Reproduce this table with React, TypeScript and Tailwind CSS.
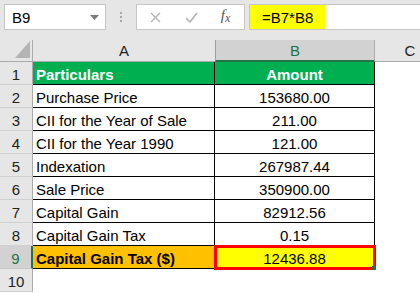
import React from "react";

const rows: { n: number; a: string; b: string }[] = [
  { n: 2, a: "Purchase Price", b: "153680.00" },
  { n: 3, a: "CII for the Year of Sale", b: "211.00" },
  { n: 4, a: "CII for the Year 1990", b: "121.00" },
  { n: 5, a: "Indexation", b: "267987.44" },
  { n: 6, a: "Sale Price", b: "350900.00" },
  { n: 7, a: "Capital Gain", b: "82912.56" },
  { n: 8, a: "Capital Gain Tax", b: "0.15" },
];

function RowNum({ n, active }: { n: number; active?: boolean }) {
  return active ? (
    <div className="flex justify-center pt-[4px] leading-[17px] bg-[#d2d2d2] border-r-2 border-r-[#217346] border-b border-b-[#c6c6c6] text-[#217346]">
      {n}
    </div>
  ) : (
    <div className="flex justify-center pt-[4px] leading-[17px] bg-[#e6e6e6] border-r border-r-[#ababab] border-b border-b-[#d0d0d0] text-[#222]">
      {n}
    </div>
  );
}

export default function App() {
  return (
    <div
      className="w-[420px] h-[293px] overflow-hidden bg-white text-[15px] text-black"
      style={{ fontFamily: '"Liberation Sans", Arial, sans-serif' }}
    >
      {/* formula bar */}
      <div className="h-[40px] bg-[#e6e6e6] flex items-start pt-[4px]">
        <div className="ml-[4px] w-[102px] h-[26px] bg-white border border-[#c6c6c6] flex items-center pl-[7px] pr-[6px]">
          <span className="flex-1 leading-[17px]">B9</span>
          <svg width="9" height="5" viewBox="0 0 9 5" className="mt-[1px]">
            <polygon points="0,0 9,0 4.5,5" fill="#7a7a7a" />
          </svg>
        </div>
        <div className="w-[30px] h-[26px] flex flex-col items-center justify-center gap-[2px]">
          <div className="w-[2px] h-[2px] bg-[#a6a6a6]" />
          <div className="w-[2px] h-[2px] bg-[#a6a6a6]" />
          <div className="w-[2px] h-[2px] bg-[#a6a6a6]" />
        </div>
        <div className="w-[109px] h-[26px] bg-white border border-[#c6c6c6] flex items-center">
          <div className="w-[36px] flex justify-center">
            <svg width="11" height="11" viewBox="0 0 11 11">
              <path d="M1 1 L10 10 M10 1 L1 10" stroke="#b3b3b3" strokeWidth="1.3" fill="none" />
            </svg>
          </div>
          <div className="w-[36px] flex justify-center">
            <svg width="13" height="11" viewBox="0 0 13 11">
              <path d="M1 6 L5 10 L12 1" stroke="#b3b3b3" strokeWidth="1.6" fill="none" />
            </svg>
          </div>
          <div
            className="flex-1 flex justify-center pr-[2px] italic text-[#555] text-[15px] leading-[17px]"
            style={{ fontFamily: '"Liberation Serif", "Times New Roman", serif' }}
          >
            <span>f</span>
            <span className="text-[12px] mt-[3px]">x</span>
          </div>
        </div>
        <div className="ml-[4px] flex-1 h-[26px] bg-white border border-[#c6c6c6] border-r-0 flex">
          <div className="w-[75px] h-full bg-[#ffff00] flex items-center pl-[12px] leading-[17px]">
            =B7*B8
          </div>
        </div>
      </div>

      {/* grid */}
      <div className="grid grid-cols-[33px_182px_160px_70px] grid-rows-[22px_repeat(10,23px)]">
        {/* header */}
        <div className="relative bg-[#e6e6e6] border-r border-r-[#ababab] border-b border-b-[#ababab]">
          <svg width="15" height="17" viewBox="0 0 15 17" className="absolute left-[15px] top-[1px]">
            <polygon points="15,0 15,17 0,17" fill="#b4b4b4" />
          </svg>
        </div>
        <div className="bg-[#e6e6e6] border-b border-b-[#ababab] flex justify-center items-start pt-[2px] leading-[17px] text-[#222]">
          A
        </div>
        <div className="bg-[#d2d2d2] border-l border-l-[#9e9e9e] border-r border-r-[#ababab] border-b-2 border-b-[#217346] flex justify-center items-start pt-[2px] leading-[17px] text-[#217346]">
          B
        </div>
        <div className="bg-[#e6e6e6] border-b border-b-[#ababab] flex justify-center items-start pt-[2px] leading-[17px] text-[#222]">
          C
        </div>

        {/* row 1 */}
        <RowNum n={1} />
        <div className="bg-[#00b050] text-white font-bold border-r border-b border-black pl-[3px] pt-[4px] leading-[17px]">
          Particulars
        </div>
        <div className="bg-[#00b050] text-white font-bold border-r border-b border-black flex justify-center pt-[4px] leading-[17px]">
          Amount
        </div>
        <div />

        {rows.map((r) => (
          <React.Fragment key={r.n}>
            <RowNum n={r.n} />
            <div className="border-r border-b border-black pl-[3px] pt-[4px] leading-[17px] whitespace-nowrap">
              {r.a}
            </div>
            <div className="border-r border-b border-black flex justify-center pt-[4px] leading-[17px]">
              {r.b}
            </div>
            <div />
          </React.Fragment>
        ))}

        {/* row 9 */}
        <RowNum n={9} active />
        <div className="bg-[#ffc000] font-bold border-r border-b border-black pl-[3px] pt-[4px] leading-[17px] whitespace-nowrap">
          Capital Gain Tax ($)
        </div>
        <div className="relative bg-[#ffff00] border-r border-b border-black flex justify-center pt-[4px] leading-[17px]">
          12436.88
          <div className="absolute -left-[1px] -right-[2px] -top-[1px] -bottom-[2px] border-[3px] border-[#ff0000]" />
          <div className="absolute -right-[2px] -bottom-[2px] w-[4px] h-[4px] bg-[#217346]" />
        </div>
        <div />

        {/* row 10 */}
        <RowNum n={10} />
        <div />
        <div />
        <div />
      </div>
    </div>
  );
}
